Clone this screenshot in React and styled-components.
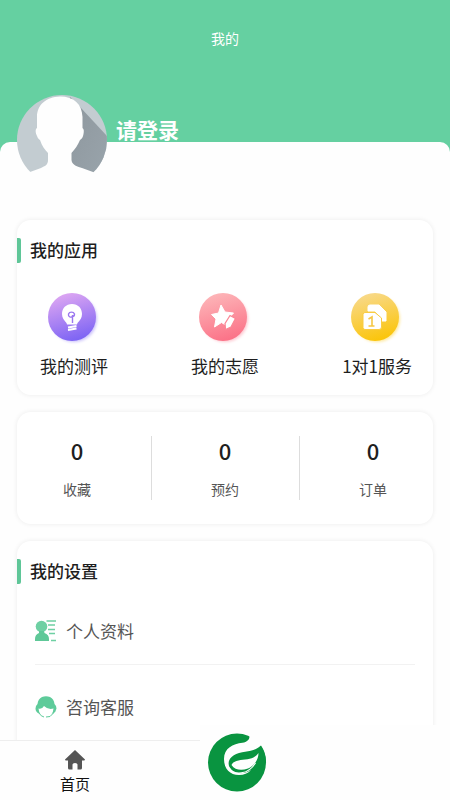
import React from "react";
import styled, { createGlobalStyle } from "styled-components";

const GlobalStyle = createGlobalStyle`
  *, *::before, *::after { box-sizing: border-box; }
  html { scrollbar-width: none; }
  body {
    margin: 0;
    background: #fefefe;
    color: #1e1e1e;
    font-family: "Noto Sans CJK SC", "Noto Sans", sans-serif;
  }
  button { font: inherit; color: inherit; }
  h1, h2, p, dl, dt, dd, ul { margin: 0; padding: 0; }
`;

const Page = styled.div`
  min-height: 100vh;
  padding-bottom: 60px;
`;

const Header = styled.header`
  display: flex;
  flex-direction: column;
  gap: 19px;
  background: #65d0a1;
`;

const PageTitle = styled.h1`
  height: 76px;
  line-height: 76px;
  text-align: center;
  font-size: 14px;
  font-weight: 400;
  color: #fff;
`;

const Profile = styled.button`
  position: relative;
  z-index: 1;
  display: flex;
  align-items: flex-start;
  align-self: flex-start;
  gap: 9px;
  margin: 0 17px -33px;
  padding: 0;
  border: 0;
  background: none;
  cursor: pointer;
`;

const Avatar = styled.svg`
  display: block;
  width: 90px;
  height: 90px;
`;

const LoginText = styled.span`
  padding-top: 20px;
  font-size: 21px;
  line-height: 28px;
  font-weight: 700;
  color: #fff;
`;

const Sheet = styled.main`
  display: flex;
  flex-direction: column;
  gap: 17px;
  margin-top: -10px;
  padding: 78px 17px 17px;
  border-radius: 10px 10px 0 0;
  background: #fefefe;
`;

const Card = styled.section`
  border-radius: 14px;
  background: #fff;
  box-shadow: 0 0 5px rgba(0, 0, 0, 0.08);
`;

const CardTitle = styled.h2`
  display: flex;
  align-items: center;
  gap: 9px;
  padding-top: 17px;
  font-size: 17px;
  line-height: 26px;
  font-weight: 500;

  &::before {
    content: "";
    width: 4px;
    height: 25px;
    border-radius: 0 2px 2px 0;
    background: #5fc698;
  }
`;

const AppList = styled.div`
  display: flex;
  justify-content: space-between;
  padding: 30px 21px 16px 23px;
`;

const AppButton = styled.button`
  display: flex;
  flex-direction: column;
  align-items: center;
  gap: 8px;
  padding: 0;
  border: 0;
  background: none;
  font-size: 17px;
  line-height: 26px;
  white-space: nowrap;
  cursor: pointer;
`;

const AppIcon = styled.svg`
  display: block;
  width: 52px;
  height: 52px;
  overflow: visible;
`;

const Stats = styled(Card)`
  display: flex;
  align-items: center;
  justify-content: space-between;
  padding: 24px 46px;
`;

const Stat = styled.dl`
  display: flex;
  flex-direction: column;
  align-items: center;
  gap: 14px;
`;

const StatValue = styled.dd`
  order: -1;
  font-size: 22px;
  line-height: 28px;
  font-weight: 500;
`;

const StatLabel = styled.dt`
  font-size: 14px;
  line-height: 22px;
  color: #555;
`;

const Divider = styled.span`
  width: 1px;
  height: 64px;
  background: #ddd;
`;

const SettingList = styled.ul`
  padding: 5px 18px 20px;
  list-style: none;
`;

const SettingItem = styled.li`
  & + & { border-top: 1px solid #f2f2f2; }
`;

const SettingButton = styled.button`
  display: flex;
  align-items: center;
  gap: 9px;
  width: 100%;
  height: 75px;
  padding: 9px 0 0;
  border: 0;
  background: none;
  font-size: 17px;
  line-height: 26px;
  color: #555;
  cursor: pointer;
`;

const SettingIcon = styled.svg`
  display: block;
  width: 22px;
  height: 22px;
`;

const TabBar = styled.nav`
  position: fixed;
  inset: auto 0 0;
  z-index: 2;
  display: grid;
  grid-template-columns: repeat(3, 1fr);
  height: 60px;
  border-top: 1px solid #eee;
  background: #fefefe;
`;

const Tab = styled.a`
  display: flex;
  flex-direction: column;
  align-items: center;
  gap: 2px;
  padding-top: 8px;
  font-size: 15px;
  line-height: 22px;
  color: #111;
  text-decoration: none;
`;

const HomeIcon = styled.svg`
  display: block;
  width: 22px;
  height: 22px;
`;

const BrandPanel = styled.a`
  position: fixed;
  right: 0;
  bottom: 0;
  z-index: 3;
  display: flex;
  align-items: center;
  width: 250px;
  height: 75px;
  padding-left: 7px;
  background: #fefefe;
`;

const BrandLogo = styled.svg`
  display: block;
  width: 60px;
  height: 60px;
`;

function AvatarPicture() {
  return (
    <Avatar viewBox="0 0 90 90" aria-hidden="true">
      <defs>
        <clipPath id="avatar-circle">
          <circle cx="45" cy="45" r="45" />
        </clipPath>
        <linearGradient id="avatar-shade" x1="0" y1="0" x2="1" y2="1">
          <stop offset="0" stopColor="#8d969d" />
          <stop offset="1" stopColor="#9aa5ac" />
        </linearGradient>
      </defs>
      <g clipPath="url(#avatar-circle)">
        <rect width="90" height="90" fill="#c3ccd1" />
        <path d="M53 2L64 13L91 42V90H50Z" fill="url(#avatar-shade)" />
      </g>
      <path
        d="M43 1.500C29 2 20 10 20 22V33C18 34 18.500 38 20 41C21 44 22 44 23 45C25 51 28 55 31 58V65C31 70 28 71 24 73L13 77L5 82V90H85V82L76 77L65 73C58 71 55 69 54.500 65V58C58 54 61 50 63 45C65 44 66 42 66.500 39C67 36 67 34 65.500 33V22C65 9 57 1.500 43 1.500Z"
        fill="#fefefe"
      />
    </Avatar>
  );
}

function AppDisc({ id, from, to, children }) {
  return (
    <AppIcon viewBox="0 0 52 52" aria-hidden="true">
      <defs>
        <linearGradient id={id} x1="0.35" y1="0" x2="0.65" y2="1">
          <stop offset="0" stopColor={from} />
          <stop offset="1" stopColor={to} />
        </linearGradient>
        <filter id={`${id}-glow`} x="-20%" y="-20%" width="150%" height="150%">
          <feGaussianBlur stdDeviation="1.5" />
        </filter>
      </defs>
      <circle cx="26" cy="26" r="23" fill={to} opacity="0.4" filter={`url(#${id}-glow)`} />
      <circle cx="24" cy="24" r="24" fill={`url(#${id})`} />
      {children}
    </AppIcon>
  );
}

function BulbIcon() {
  return (
    <AppDisc id="bulb" from="#dda6f2" to="#7a62f4">
      <path
        d="M24 11C18 11 14 15.300 14 21C14 25 16.200 27.500 18.500 30L19 31.500H29L29.500 30C32 27.500 34 25 34 21C34 15.300 30 11 24 11Z"
        fill="#fff"
      />
      <path d="M20 34.500L28.500 33M20 37L28.500 35.500" stroke="#fff" strokeWidth="1.800" fill="none" />
      <path
        d="M24.500 30V22M24.500 23.500C22.500 25 20 23.500 20.500 21C21.500 18.500 25.500 18.500 26.500 21C26.500 22.500 25.500 23.500 24.500 23.500"
        fill="none"
        stroke="#9b77ef"
        strokeWidth="1.400"
      />
    </AppDisc>
  );
}

function StarPenIcon() {
  return (
    <AppDisc id="star" from="#fdb5b8" to="#fb7086">
      <path
        d="M22 12L26 19L34.500 20L30 25L26.500 32L22.500 29.500L15.500 34L17 26L12.500 21.500L19.500 20Z"
        fill="#fff"
        stroke="#fff"
        strokeLinejoin="round"
      />
      <path
        d="M31 22.500L36.500 25.500L32 34L26.500 36.500L26 30.500Z"
        fill="#fff"
        stroke="#fa8795"
        strokeWidth="1.300"
        strokeLinejoin="round"
      />
    </AppDisc>
  );
}

function CardsIcon() {
  return (
    <AppDisc id="cards" from="#f8d98a" to="#fbc406">
      <path
        d="M19 12H28L35 19V28H29V23L24 18H17V14Q17 12 19 12Z"
        fill="#fff"
        stroke="#fff"
        strokeLinejoin="round"
      />
      <path
        d="M14 19.500H24L30.500 25V34Q30.500 36.500 28 36.500H14Q12 36.500 12 34.500V21.500Q12 19.500 14 19.500Z"
        fill="#fff"
        stroke="#f9cc42"
      />
      <path d="M17.500 26L21 24V33M17.500 33H23.500" stroke="#f6c744" strokeWidth="1.600" fill="none" />
    </AppDisc>
  );
}

function PersonIcon() {
  return (
    <SettingIcon viewBox="0 0 22 22" aria-hidden="true">
      <circle cx="6.500" cy="6.500" r="5.800" fill="#6ed0a3" />
      <path d="M4 11H9L9.500 13Q14 14.500 14 19V21H0V19Q0 14.500 4 13Z" fill="#5fc898" />
      <path d="M11.500 1H21M13 5H20M13 9.500H20M14 13.500H20M16 20.500H21" stroke="#6ed0a3" strokeWidth="1.400" />
    </SettingIcon>
  );
}

function SupportIcon() {
  return (
    <SettingIcon viewBox="0 0 22 22" aria-hidden="true">
      <path
        d="M7 1Q11 -0.500 15 1Q19 3 19.500 8Q21.500 9.500 21.500 12.500Q21 16 18 17.500L4 17.500Q0.500 16 0.500 12.500Q0.500 9.500 2.500 8Q3 3 7 1Z"
        fill="#5ecb9a"
      />
      <path d="M3.500 12.500Q7 13.500 9 10Q13 14 18.500 12.500Q18 20 11 20.500Q4 20 3.500 12.500Z" fill="#fff" />
      <path d="M4 17Q6 20.500 9 21M11 21L15 20.500L18.500 17" stroke="#5ecb9a" fill="none" />
    </SettingIcon>
  );
}

const apps = [
  { label: "我的测评", Icon: BulbIcon },
  { label: "我的志愿", Icon: StarPenIcon },
  { label: "1对1服务", Icon: CardsIcon },
];

const stats = [
  { label: "收藏", value: 0 },
  { label: "预约", value: 0 },
  { label: "订单", value: 0 },
];

const settings = [
  { label: "个人资料", Icon: PersonIcon },
  { label: "咨询客服", Icon: SupportIcon },
];

export default function App() {
  return (
    <Page>
      <GlobalStyle />
      <Header>
        <PageTitle>我的</PageTitle>
        <Profile type="button">
          <AvatarPicture />
          <LoginText>请登录</LoginText>
        </Profile>
      </Header>

      <Sheet>
        <Card>
          <CardTitle>我的应用</CardTitle>
          <AppList>
            {apps.map(({ label, Icon }) => (
              <AppButton type="button" key={label}>
                <Icon />
                {label}
              </AppButton>
            ))}
          </AppList>
        </Card>

        <Stats>
          {stats.map(({ label, value }, index) => (
            <React.Fragment key={label}>
              {index > 0 && <Divider />}
              <Stat>
                <StatLabel>{label}</StatLabel>
                <StatValue>{value}</StatValue>
              </Stat>
            </React.Fragment>
          ))}
        </Stats>

        <Card>
          <CardTitle>我的设置</CardTitle>
          <SettingList>
            {settings.map(({ label, Icon }) => (
              <SettingItem key={label}>
                <SettingButton type="button">
                  <Icon />
                  {label}
                </SettingButton>
              </SettingItem>
            ))}
          </SettingList>
        </Card>
      </Sheet>

      <TabBar>
        <Tab href="#home">
          <HomeIcon viewBox="0 0 22 22" aria-hidden="true">
            <path
              d="M11 1L21 10.500Q21 11.500 20 11.500H18V19Q18 20.500 16.500 20.500H13.500V15.500Q13.500 14 11 14Q8.500 14 8.500 15.500V20.500H5.500Q4 20.500 4 19V11.500H2Q1 11.500 1 10.500Z"
              fill="#555"
            />
          </HomeIcon>
          首页
        </Tab>
      </TabBar>

      <BrandPanel href="#brand" aria-label="首页">
        <BrandLogo viewBox="0 0 60 60" aria-hidden="true">
          <circle cx="30" cy="29.500" r="29" fill="#099440" />
          <path
            d="M42.500 3C42.500 7 40 9 35.500 9.800C26 11 17 15 17 26C17 36 23 42 32 42C42 42 48 36 51 20L53.500 13L62 10V-2H44Z"
            fill="#fefefe"
          />
          <path
            d="M54 12.500C57 17 59 22 59 29L47 38L43 37.500C36 42 25 41 22 33C20.500 27 24 22.500 32 20C41 17.500 47 19 54 12.500Z"
            fill="#099440"
          />
          <path
            d="M24.500 32C26 28 32 27 38 26.500C45 26 49 23.500 51.500 20C51.500 27 47 33 41 35.500C34 38 28 37 24.500 32Z"
            fill="#fefefe"
          />
          <path d="M22 34.500C27 43 41 42 48.500 30" fill="none" stroke="#fefefe" strokeWidth="1.200" />
        </BrandLogo>
      </BrandPanel>
    </Page>
  );
}
